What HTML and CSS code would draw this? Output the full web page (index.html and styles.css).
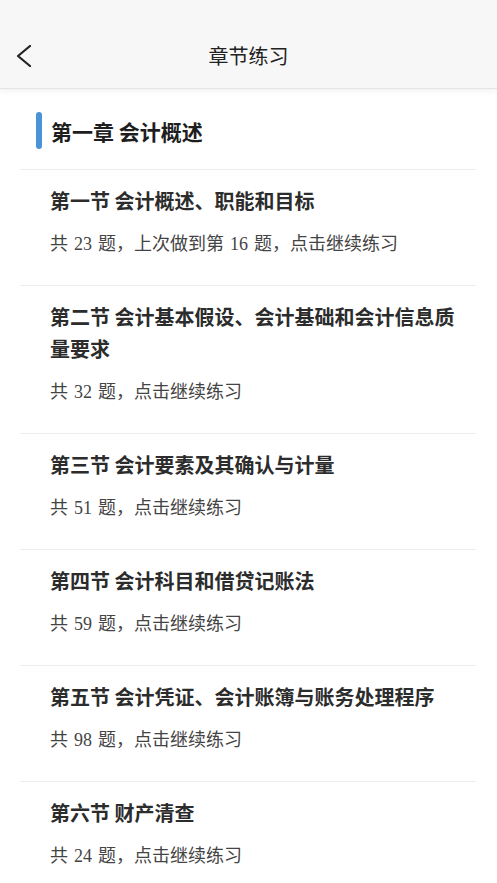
FILE: index.html
```html
<!DOCTYPE html>
<html lang="zh-CN">
<head>
    <meta charset="UTF-8">
    <title>章节练习</title>
    <link rel="stylesheet" href="styles.css">
</head>
<body>
<div class="header">
    <span class="back">
        <svg width="16" height="22" viewBox="0 0 16 22"><polyline points="14,1 2,11 14,21" fill="none" stroke="#222" stroke-width="2.2" stroke-linecap="round" stroke-linejoin="round"/></svg>
    </span>
    <span class="header-title">章节练习</span>
</div>
<div class="list">
    <div class="chapter">
        <span class="chapter-title">第一章 会计概述</span>
    </div>
    <div class="item">
        <div class="item-title">第一节 会计概述、职能和目标</div>
        <div class="item-sub">共 23 题，上次做到第 16 题，点击继续练习</div>
    </div>
    <div class="item">
        <div class="item-title">第二节 会计基本假设、会计基础和会计信息质量要求</div>
        <div class="item-sub">共 32 题，点击继续练习</div>
    </div>
    <div class="item">
        <div class="item-title">第三节 会计要素及其确认与计量</div>
        <div class="item-sub">共 51 题，点击继续练习</div>
    </div>
    <div class="item">
        <div class="item-title">第四节 会计科目和借贷记账法</div>
        <div class="item-sub">共 59 题，点击继续练习</div>
    </div>
    <div class="item">
        <div class="item-title">第五节 会计凭证、会计账簿与账务处理程序</div>
        <div class="item-sub">共 98 题，点击继续练习</div>
    </div>
    <div class="item">
        <div class="item-title">第六节 财产清查</div>
        <div class="item-sub">共 24 题，点击继续练习</div>
    </div>
</div>
</body>
</html>
```

FILE: styles.css
```css
body{
    margin:0;
    background:#fff;
    font-family:"Noto Sans CJK SC", sans-serif;
    overflow:hidden;
}
.header{
    height:64px;
    padding-top:24px;
    background:#f7f7f7;
    border-bottom:1px solid #e4e4e4;
    box-shadow:0 2px 6px rgba(0,0,0,.06);
    position:relative;
    display:flex;
    align-items:center;
    justify-content:center;
}
.back{
    position:absolute;
    left:16px;
    top:45px;
    width:16px;
    height:22px;
}
.back svg{display:block;}
.header-title{
    font-size:20px;
    color:#222;
    line-height:28px;
}
.list{
    margin:0 21px 0 20px;
}
.chapter{
    padding:23px 0 20px 16px;
    border-bottom:1px solid #ececec;
}
.chapter-title{
    display:flex;
    align-items:center;
    height:37px;
    font-size:21px;
    font-weight:600;
    color:#1e1e1e;
}
.chapter-title::before{
    content:"";
    width:6px;
    height:37px;
    border-radius:3px;
    background:#4a93d7;
    margin-right:9px;
}
.item{
    padding:15px 10px 28px 30px;
    border-bottom:1px solid #ececec;
}
.item:last-child{border-bottom:0;}
.item-title{
    font-size:20px;
    line-height:32px;
    font-weight:600;
    color:#2c2c2c;
}
.item-sub{
    margin-top:14px;
    font-family:"Liberation Serif", "Noto Sans CJK SC", serif;
    font-size:18px;
    word-spacing:1.5px;
    line-height:26px;
    color:#444;
}
```
